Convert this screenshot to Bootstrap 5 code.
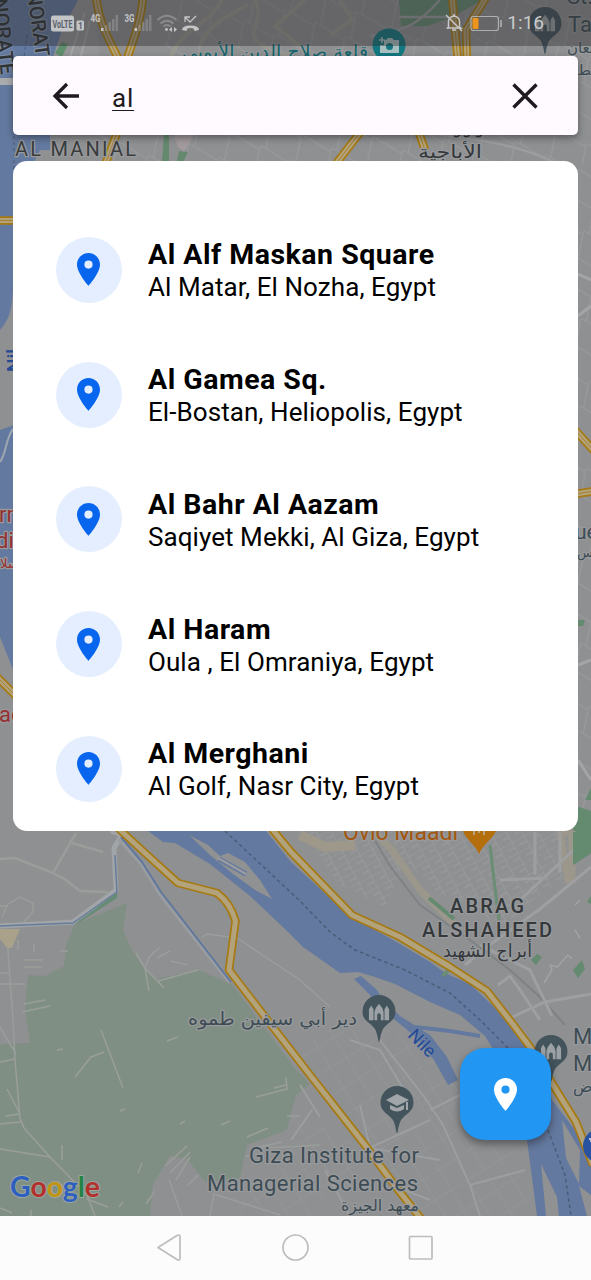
<!DOCTYPE html>
<html lang="en">
<head>
<meta charset="utf-8">
<meta name="viewport" content="width=device-width, initial-scale=1">
<title>Place search</title>
<link href="https://cdn.jsdelivr.net/npm/bootstrap@5.3.0/dist/css/bootstrap.min.css" rel="stylesheet">
<style>
body{font-family:Roboto,"DejaVu Sans",sans-serif;background:#fcfcfc;color:#000}
.screen{width:591px;height:1280px}
.stage{height:1216px}
.map-canvas{inset:0;z-index:0}
.status{height:46px;background:rgba(45,46,48,.42);padding:0 47px 0 50px;color:#c9cacb}
.status-time{font-size:19px;letter-spacing:0;line-height:46px}
.search{height:79px;margin:10px 13px 0;border-radius:5px;background:#fefaff;box-shadow:0 3px 7px rgba(0,0,0,.38);padding:0 39px}
.query{font-size:26px;letter-spacing:.8px;line-height:30px;margin-left:32px;padding-top:5px;color:#1f1b20;text-decoration:underline;text-decoration-thickness:1.4px;text-underline-offset:3px}
.results{height:670px;margin:26px 13px 0;border-radius:14px;padding-top:46.5px;background:#fff}
.place{height:124.75px;padding-left:42.5px}
.place-dot{width:66px;height:66px;background:#e4eefe}
.place-text{padding:3px 0 0 2.5px}
.place-name{font-size:28.500px;letter-spacing:.5px;line-height:32px;font-weight:700}
.place-area{font-size:26px;letter-spacing:.07px;line-height:32px}
.fab{right:40px;top:1048px;width:91px;height:92px;border-radius:25px;background:#2196f3;box-shadow:0 4px 9px rgba(0,0,0,.4)}
.sysnav{height:64px;background:#fcfcfc;padding-right:2px}
.hw{fill:none;stroke-linejoin:round}
.lab{font-family:Roboto,"DejaVu Sans",sans-serif;fill:#3d4c54;stroke:#989a9c;stroke-width:2.5px;paint-order:stroke;stroke-linejoin:round}
.ar{font-family:"DejaVu Sans",sans-serif}
</style>
</head>
<body>
<main class="screen position-relative overflow-hidden d-flex flex-column">
<div class="stage position-relative overflow-hidden d-flex flex-column">
<svg class="map-canvas position-absolute" width="591" height="1216" viewBox="0 0 591 1216" aria-hidden="true">
<defs>
<pattern id="blocks" width="14" height="12" patternUnits="userSpaceOnUse" patternTransform="rotate(-28)"><path d="M0 0H14M0 0V12M7 6H14" fill="none" stroke="#9c9ea0" stroke-width="1.2"/></pattern>
<pattern id="blocks2" width="24" height="19" patternUnits="userSpaceOnUse" patternTransform="rotate(58)"><path d="M0 0H24M0 0V19" fill="none" stroke="#97999b" stroke-width="1"/></pattern>
<pattern id="blocks3" width="33" height="27" patternUnits="userSpaceOnUse" patternTransform="rotate(24)"><path d="M0 0L33 4M0 0L6 27" fill="none" stroke="#999b9d" stroke-width="1.1"/></pattern>
<path id="r1" d="M118 828L145 853L178 883L217 893C229 902 233 912 235.500 921L229 970L262 1013L310 1075L365 1145L396 1187L422 1220"/>
<path id="r2" d="M272 829L291 852L352 915L400 937L450 967L487 991L512 1023L530 1047L555 1088L576 1122L593 1165"/>
<path id="r3" d="M96 -4C98 20 108 38 120 62M143 -4C142 18 134 38 126 62M105 165L118 130M452 -4L458 62M487 -4L466 30L467 62M335 165L362 130M418 130L425 150M-5 220.500H20M-5 675L20 700M575 430L595 452M575 494L595 491"/>
<symbol id="mark-pin" viewBox="0 0 34 47"><path d="M17 47C16 47 16 40 13 34C8 27 .5 26 .5 16.500A16.500 16.500 0 0 1 33.500 16.500C33.500 26 26 27 21 34C18 40 18 47 17 47Z" fill="#43545c"/></symbol>
<symbol id="mosque" viewBox="0 0 24 20"><path d="M1 19V7L3.500 3L6 7V19ZM18 19V7L20.500 3L23 7V19ZM7 19V10Q8 5 12 1Q16 5 17 10V19H14V13Q12 10 10 13V19Z" fill="#9ba1a4"/></symbol>
</defs>
<rect width="591" height="1216" fill="#8f9092"/>
<path d="M170 0H591V165H90V130L160 60Z" fill="url(#blocks3)"/>
<path d="M222 0C210 25 180 28 170 60M255 0C270 30 225 36 290 56M305 0L275 26L312 56M200 46C210 20 235 14 248 4M340 0L352 20L330 35" fill="none" stroke="#99988f" stroke-width="4"/>
<path d="M399 0H483L450 18L427 26H401Z" fill="#648a70"/>
<path d="M440 0C420 22 410 30 370 36M399 17H450M400 130C500 140 530 150 560 165" fill="none" stroke="#9c9d9f" stroke-width="2.500"/>
<!-- Nile, northern reach -->
<path d="M0 0H80L65 40L50 60V150H40L30 170L20 300L13 290C12 310 9 320 0 330Z" fill="#64799f"/>
<path d="M78 0L62 30L52 60H100L94 0Z" fill="#949597"/><path d="M85 12L69 60M90 20L80 60" stroke="#a4a5a7" stroke-width="2" fill="none"/>
<path d="M55 53L62 42L68 44L62 57Z" fill="#5f8e6c"/>
<path d="M0 78H14V85H0Z" fill="#aaabad"/>
<path d="M164 135H169V161H162ZM179 151L188 152L184 161H177Z" fill="#64896f"/>
<path d="M174 135H194L184 152L178 147Z" fill="#a39a9d"/>
<path d="M27 35L14 130V205" fill="none" stroke="#4b5c79" stroke-dasharray="3 3"/>
<path d="M0 430L14 425V672L0 637Z" fill="#64799f"/><path d="M13 429C5 440 7 452 0 462" stroke="#9fa7b2" stroke-width="2" fill="none"/>
<path d="M578 170H591V825H578Z" fill="url(#blocks3)"/>
<path d="M578 274L591 280M578 316L591 306M578 760L591 780M578 665L591 660" stroke="#a3a5a7" stroke-width="3"/>
<path d="M578 620H585L583 626H578ZM585 800L591 788V800ZM573 805L591 811V853L573 865Z" fill="#648a70"/>
<!-- Fields -->
<path d="M28 975L45 976L64 966L66 945L75 924L127 903L123 930L132 950L145 970L155 979L198 970L232 984L296 1070L310 1084L296 1095L287 1130L247 1145L240 1178L205 1182L187 1159L170 1156L153 1184L150 1216H0V1044L30 1043L25 1010Z" fill="#808f84"/>
<path d="M73 924L117 892V898L80 922Z" fill="#678c75"/>
<g fill="none" stroke="#9a9e9b" stroke-width="1.500">
<path d="M0 859L15 858L53 873L66 880L80 891L108 892M53 873L76 833M72 843L103 852" stroke-width="2.500"/>
<path d="M2 917L8 904L20 897L33 903L33 912L22 924M0 906H7M8 945V952L13 1020L15 1060L20 1118L24 1128L50 1157L87 1195L95 1216M0 1149L50 1157M0 1027L16 1054M7 1089L19 1112M0 1124L21 1122M5 1116L20 1114M0 1062L15 1059M0 984H25M0 973H10M24 960H43M24 967H42M60 951H68M18 940V950M34 944V952M24 1004L45 1000M22 1012L50 1006"/>
<path d="M101 1030L123 1088M75 1077L91 1057L104 1052M57 1050L63 1049M167 1041L178 1037M256 1097L287 1089L286 1077M274 1088L286 1085M120 1111L125 1109M180 1124L185 1121M221 1125L230 1121M247 1137L268 1128M138 1173L142 1163M119 1207L123 1202M146 1204L155 1191M62 1145V1160M87 1199L108 1207M0 1208L12 1213M31 1210V1216M245 1156H249M287 1116H300"/>
<path d="M136 953L145 968L164 988M145 968L149 991M145 968L149 957L160 947M158 981L198 970M157 958L170 951M171 961L188 965M165 1166L187 1146M170 1173L190 1152M176 1180L190 1157M188 1185L198 1175M169 1180L182 1216M210 1216L214 1194L280 1215"/>
<path d="M202 937L207 934L237 938L300 980L330 1007M250 1149L320 1145M250 1149L282 1142"/>
</g>
<path d="M0 929H20L12 948H7L0 939Z" fill="#aaa18b"/>
<path d="M0 926L73 922L116 890L114 848L122 835L111 831" fill="none" stroke="#a1a5a7" stroke-width="5"/>
<path d="M0 926L73 923L117 892L115 855" fill="none" stroke="#667c9d" stroke-width="1.500"/>
<path d="M119 839L142 864L161 895L230 982" fill="none" stroke="#999ca0" stroke-width="4.500"/><path d="M121 837L142 862L161 892L231 982" fill="none" stroke="#60779c" stroke-width="2"/>
<!-- Maadi street grid -->
<path d="M300 832H575V872L540 895L500 930L470 902L440 895L405 860L385 907L340 885L316 851Z" fill="url(#blocks)"/>
<path d="M375 832L392 850L420 890L455 925M560 832L572 834V880H568Z" fill="none" stroke="#9b978b" stroke-width="7"/>
<path d="M370 832L390 866L420 905L470 940L510 970L540 997L565 1025" fill="none" stroke="#7e8284" stroke-width="2"/>
<path d="M300 835L325 847L355 845" stroke="#9d988a" stroke-width="10" fill="none"/>
<path d="M490 845L494 880L499 920" stroke="#6a8d75" stroke-width="3" fill="none"/>
<path d="M429 898L454 919" stroke="#648a70" stroke-width="4"/>
<path d="M591 867L540 909L488 946L465 965M480 945L530 970L552 1016M510 1018L545 1002L591 994M498 985L510 976L520 990L540 1020M560 832V872M500 880L545 878M520 900L578 846M535 832V875" stroke="#9d9fa1" stroke-width="3" fill="none"/>
<path d="M573 865L591 853V832H573ZM587 902L591 896V904ZM531 960L537 954L542 957L536 965ZM573 970L582 960L585 969L578 978Z" fill="#648a70"/>
<path d="M544 983L552 970L550 965L557 967L568 955L572 959M575 930L580 938M575 905L580 900" fill="none" stroke="#a1a3a5" stroke-width="1.500"/>
<!-- Giza streets -->
<path d="M320 1030L420 1030L470 1080L510 1140L530 1216H425L370 1148L300 1060Z" fill="url(#blocks2)"/>
<path d="M291 1110L350 1140L360 1170L310 1216L240 1216L245 1190L291 1160Z" fill="url(#blocks2)"/>
<path d="M380 1040L425 1098L443 1125L470 1185L480 1216M350 1040L380 1050L410 1100M365 1150L430 1120M300 1085L320 1117M360 1105L370 1148L440 1160M396 1187L430 1200M430 1110L490 1080M470 1185L525 1170M325 1170L350 1216M291 1140L312 1110" fill="none" stroke="#9c9ea0" stroke-width="2"/>
<!-- Nile, southern reach -->
<path d="M148 831H266L291 862L352 918L400 936L450 966L487 991L512 1023L545 1075L552 1100L575 1130L591 1165V1216H537L527 1140L515 1085L485 1036L460 1015L430 1002L395 984L375 977L358 972L340 973L303 947L285 929L250 896L210 864L175 843L163 842Z" fill="#64799f"/>
<path d="M352 918L370 927L400 944L430 962L445 973L470 984L495 1008L512 1026L487 991L400 936Z" fill="#8f9193"/>
<path d="M189 835L208 845L220 856L228 853L245 862L260 880L272 899L255 890L233 874L210 855Z" fill="#8f9193"/>
<path d="M219 859L246 874" stroke="#64799f" stroke-width="5"/><path d="M218 858L246 874" stroke="#999b9e" stroke-width="2.500"/>
<path d="M354 979L361 976L377 990L384 1001L400 1016L430 1035L447 1057L458 1080L448 1085L434 1060L416 1037L390 1016L370 995Z" fill="#64799f"/>
<path d="M415 1027L450 1031L480 1036" fill="none" stroke="#64799f" stroke-width="4"/>
<path d="M562 1120L580 1150L579 1184L566 1158ZM541 1164L557 1197L559 1216H546ZM579 1186L591 1195V1216H587Z" fill="#8f9193"/>
<path d="M225 831L300 901L330 932L355 950L405 970L450 993L480 1020L510 1050M548 1130L565 1175L571 1216" fill="none" stroke="#4b5c79" stroke-width="1.500" stroke-dasharray="3.500 3"/>
<path d="M441 975L447 969L450 971L445 977Z" fill="#6a8d75"/>
<g class="hw">
<g stroke="#a67a12" stroke-width="8.500"><use href="#r1"/><use href="#r2"/><use href="#r3"/></g>
<g stroke="#b3a37d" stroke-width="5"><use href="#r1"/><use href="#r2"/><use href="#r3"/></g>
<g stroke="#a37d22" stroke-width=".9"><use href="#r3"/></g>
</g>
<!-- Pins -->
<use href="#mark-pin" x="362" y="995" width="34" height="47"/><use href="#mosque" x="368" y="1002" width="22" height="20"/>
<use href="#mark-pin" x="380" y="1086" width="34" height="47"/>
<path d="M386 1100L397 1094L409 1100L397 1106ZM390 1105V1109Q397 1114 404 1109V1105L397 1108ZM406 1102H408V1110H406Z" fill="#a0a6a9"/>
<use href="#mark-pin" x="534" y="1035" width="34" height="47"/><use href="#mosque" x="540" y="1041" width="22" height="20"/>
<use href="#mark-pin" x="528" y="7" width="34" height="47"/><use href="#mosque" x="534" y="13" width="22" height="20"/>
<circle cx="389" cy="45" r="16.500" fill="#127780"/>
<path d="M384 40H386L388 38H392L394 40H399V53H380V45H384Z" fill="#a8bfc2"/><circle cx="389.500" cy="46.500" r="3.500" fill="#127780"/><path d="M382 37V43M379 40H385" stroke="#a8bfc2" stroke-width="1.500"/>
<path d="M463 831H496C491 841 484 843 479 854C475 844 466 840 463 831Z" fill="#b56e0c"/><path d="M474 828V835M479 828V833M484 828V835" stroke="#b7a17e" stroke-width="2" fill="none"/>
<circle cx="600" cy="1146" r="17" fill="#2953a0"/><path d="M589 1139H591V1142" stroke="#b7c1d2" stroke-width="2" fill="none"/>
<!-- Labels -->
<g class="lab" font-size="22">
<g font-size="20" fill="#303437" font-weight="500"><text transform="translate(1 75) rotate(84)" text-anchor="end" style="stroke:#7888a3">NORATE</text>
<text transform="translate(36 57) rotate(82)" text-anchor="end" style="stroke:#8490a4">NORAT</text></g>
<text x="15" y="155.500" font-size="20" textLength="121" fill="#3a3c3e">AL MANIAL</text>
<text x="450" y="913" font-size="20" textLength="74" fill="#34383b" font-weight="500">ABRAG</text>
<text x="422" y="936.500" font-size="20" textLength="130" fill="#34383b" font-weight="500">ALSHAHEED</text>
<text x="249" y="1163" font-size="22" textLength="170">Giza Institute for</text>
<text x="207" y="1190.500" font-size="22" textLength="211">Managerial Sciences</text>
<text x="343" y="840" textLength="115" font-size="23" style="fill:#a3560d">Ovio Maadi</text>
<text transform="translate(407 1036) rotate(46)" font-size="18" style="fill:#244a91;stroke:#7588aa;stroke-width:1px">Nile</text>
<text transform="translate(20 372) rotate(-90)" font-size="19" font-weight="500" style="fill:#244a91;stroke:none">Nil</text>
<text x="567" y="4">St.</text><text x="568" y="32">Ta</text>
<text x="573" y="1044">M</text><text x="573" y="1071">M</text>
<text x="575" y="539" font-size="21">ue</text>
<g style="fill:#962f32"><text x="-1" y="522">rm</text><text x="-4" y="548">di</text><text x="-1" y="722">ad</text></g>
<g class="ar" font-size="18">
<text x="182" y="58" textLength="186" lengthAdjust="spacingAndGlyphs" style="fill:#14656c">قلعة صلاح الدين الأيوبي</text>
<text x="418" y="158" textLength="64" lengthAdjust="spacingAndGlyphs" style="fill:#34383b">الأباجية</text>
<path d="M454 136q4 2 6-2M464 136q4 2 6-2M476 136q5 2 6-3" fill="none" style="stroke:#34383b;stroke-width:1.500px"/>
<text x="443" y="957" textLength="89" lengthAdjust="spacingAndGlyphs" style="fill:#34383b">أبراج الشهيد</text>
<text x="188" y="1025" textLength="169" lengthAdjust="spacingAndGlyphs">دير أبي سيفين طموه</text>
<text x="341" y="1211" font-size="16" textLength="78" lengthAdjust="spacingAndGlyphs">معهد الجيزة</text>
<text x="567" y="53" font-size="15">سمعان</text><text x="577" y="75" font-size="15">قط</text><text x="573" y="1092" font-size="16">ض</text>
<text x="0" y="568" font-size="13" style="fill:#962f32">سلا</text><text x="577" y="557" font-size="13">سس</text>
</g>
<text x="10" y="1197" font-family="Lato" font-size="29" font-weight="700" textLength="90" lengthAdjust="spacingAndGlyphs" style="stroke:#9aa69e;stroke-width:2px"><tspan fill="#2d5fc0">G</tspan><tspan fill="#b3312c">o</tspan><tspan fill="#c19512">o</tspan><tspan fill="#2d5fc0">g</tspan><tspan fill="#278344">l</tspan><tspan fill="#b3312c">e</tspan></text>
</g>
</svg>

<header class="status position-relative d-flex align-items-center">
<svg width="160" height="24" viewBox="50 11 160 24" fill="#c3c4c6">
<rect x="51" y="15.500" width="23" height="16" rx="2.500"/><text x="52.500" y="28" font-size="10.500" font-weight="700" textLength="20" lengthAdjust="spacingAndGlyphs" fill="#59616e">VoLTE</text>
<rect x="76.500" y="20.500" width="7.500" height="10" rx="1.500"/><text x="78" y="29" font-size="8.500" font-weight="700" fill="#59616e">1</text>
<text x="90.500" y="22" font-size="10" font-weight="700" textLength="10" lengthAdjust="spacingAndGlyphs">4G</text><text x="124.500" y="22" font-size="10" font-weight="700" textLength="10" lengthAdjust="spacingAndGlyphs">3G</text>
<path d="M101 28H103.500V31H101ZM134.500 28H137V31H134.500Z"/>
<path opacity=".3" d="M105 25H107.500V31H105ZM108.500 22H111V31H108.500ZM112 19H114.500V31H112ZM115.500 15H118V31H115.500ZM138.500 25H141V31H138.500ZM142 22H144.500V31H142ZM145.500 19H148V31H145.500ZM149 15H151.500V31H149Z"/>
<g fill="none" stroke="#c3c4c6" stroke-width="1.800" opacity=".4"><path d="M157.500 20Q167 11.500 176.500 20M160.500 23.500Q167 18 173.500 23.500M163.500 26.500Q167 23.500 170.500 26.500"/></g>
<circle cx="166.500" cy="29.500" r="1.400"/><path d="M169 29.500L172 27V32ZM177 29.500L174 27V32Z"/>
<path d="M185 22V17H190M185 17L190 22L196 16" fill="none" stroke="#c3c4c6" stroke-width="1.300"/><path d="M182 30Q182 25.500 190.500 25.500Q199 25.500 199 30L194.500 31L193.500 28.500Q190.500 27.500 187.500 28.500L186.500 31Z"/>
</svg>
<svg class="ms-auto" width="62" height="22" viewBox="445 12 62 22" fill="none" stroke="#c6c7c8" stroke-width="1.500"><path d="M448.500 27V21Q449 17 454 16Q459 17 459.500 21V27L461 28H447.500ZM452 30H456M446 15L462 31M453 15H455"/><rect x="471" y="16.500" width="27.500" height="14" rx="2.500" stroke-width="1.200" opacity=".75"/><path d="M501 20V27" opacity=".8"/><rect x="472.500" y="18" width="6" height="11" rx="1" fill="#ed941f" stroke="none"/></svg>
<span class="status-time">1:16</span>
</header>

<section class="search position-relative d-flex align-items-center">
<svg width="28" height="28" viewBox="0 0 28 28" fill="none" stroke="#1e1a1f" stroke-width="3.300"><path d="M27 14H3M15 2L3 14L15 26"/></svg>
<span class="query">al</span>
<svg class="ms-auto" width="28" height="28" viewBox="0 0 28 28" stroke="#1e1a1f" stroke-width="3.400"><path d="M2.500 2.500L25.500 25.500M25.500 2.500L2.500 25.500"/></svg>
</section>

<section class="results position-relative overflow-hidden">
<svg class="d-none"><symbol id="place-pin" viewBox="5 2 14 20"><path fill-rule="evenodd" d="M12 2C8.130 2 5 5.130 5 9c0 5.250 7 13 7 13s7-7.750 7-13c0-3.870-3.130-7-7-7zm0 9.500a2.500 2.500 0 0 1 0-5 2.500 2.500 0 0 1 0 5z"/></symbol></svg>
<div class="place d-flex align-items-center gap-4"><div class="place-dot rounded-circle d-flex align-items-center justify-content-center flex-shrink-0"><svg width="23" height="33" fill="#0866ee"><use href="#place-pin"/></svg></div><div class="place-text text-nowrap"><div class="place-name">Al Alf Maskan Square</div><div class="place-area">Al Matar, El Nozha, Egypt</div></div></div>
<div class="place d-flex align-items-center gap-4"><div class="place-dot rounded-circle d-flex align-items-center justify-content-center flex-shrink-0"><svg width="23" height="33" fill="#0866ee"><use href="#place-pin"/></svg></div><div class="place-text text-nowrap"><div class="place-name">Al Gamea Sq.</div><div class="place-area">El-Bostan, Heliopolis, Egypt</div></div></div>
<div class="place d-flex align-items-center gap-4"><div class="place-dot rounded-circle d-flex align-items-center justify-content-center flex-shrink-0"><svg width="23" height="33" fill="#0866ee"><use href="#place-pin"/></svg></div><div class="place-text text-nowrap"><div class="place-name">Al Bahr Al Aazam</div><div class="place-area">Saqiyet Mekki, Al Giza, Egypt</div></div></div>
<div class="place d-flex align-items-center gap-4"><div class="place-dot rounded-circle d-flex align-items-center justify-content-center flex-shrink-0"><svg width="23" height="33" fill="#0866ee"><use href="#place-pin"/></svg></div><div class="place-text text-nowrap"><div class="place-name">Al Haram</div><div class="place-area">Oula , El Omraniya, Egypt</div></div></div>
<div class="place d-flex align-items-center gap-4"><div class="place-dot rounded-circle d-flex align-items-center justify-content-center flex-shrink-0"><svg width="23" height="33" fill="#0866ee"><use href="#place-pin"/></svg></div><div class="place-text text-nowrap"><div class="place-name">Al Merghani</div><div class="place-area">Al Golf, Nasr City, Egypt</div></div></div>
</section>
<button class="fab position-absolute border-0 p-0 d-flex align-items-center justify-content-center" aria-label="My place"><svg width="23" height="33" viewBox="5 2 14 20" fill="#fff"><path fill-rule="evenodd" d="M12 2C8.130 2 5 5.130 5 9c0 5.250 7 13 7 13s7-7.750 7-13c0-3.870-3.130-7-7-7zm0 9.500a2.500 2.500 0 0 1 0-5 2.500 2.500 0 0 1 0 5z"/></svg></button>
</div>
<nav class="sysnav d-flex align-items-center justify-content-center">
<svg width="278" height="30" viewBox="156 1233 278 30" fill="none" stroke="#bdbdbd" stroke-width="1.700" stroke-linejoin="round"><path d="M158 1247.500L177 1235.500Q180 1234 180 1237V1258Q180 1261 177 1259.500Z"/><circle cx="295.500" cy="1247.500" r="12.500"/><rect x="409.500" y="1236.500" width="22.500" height="22.500" rx="1"/></svg>
</nav>
</main>
<script src="https://cdn.jsdelivr.net/npm/bootstrap@5.3.0/dist/js/bootstrap.bundle.min.js"></script>
</body>
</html>
